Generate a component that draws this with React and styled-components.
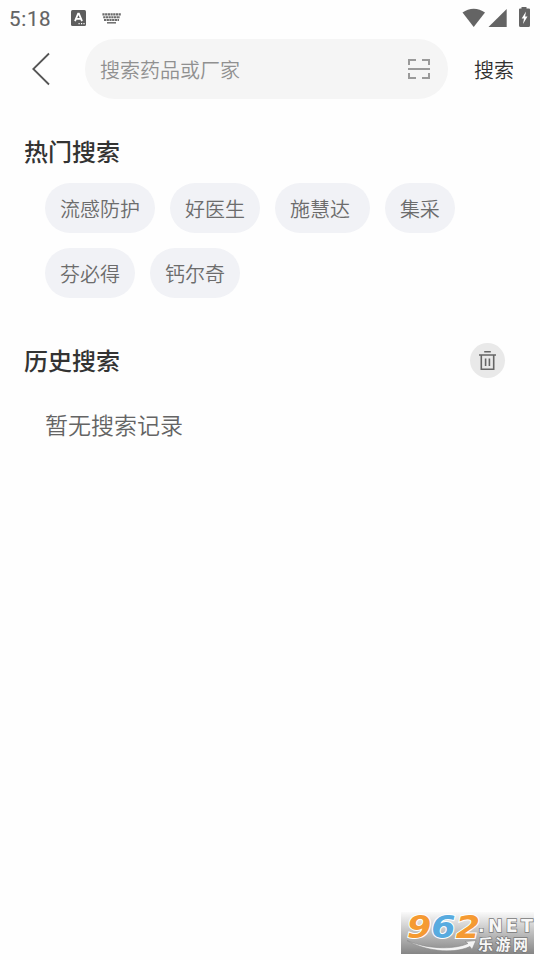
import React from 'react';
import styled, { createGlobalStyle } from 'styled-components';

const GlobalStyle = createGlobalStyle`
  * {
    box-sizing: border-box;
  }

  body {
    margin: 0;
    background: #fefefe;
    font-family: Roboto, "Noto Sans CJK SC", sans-serif;
  }
`;

const Screen = styled.div`
  position: relative;
  width: 540px;
  height: 960px;
  overflow: hidden;
  background: #fefefe;
`;

const StatusBar = styled.div`
  height: 39px;
  padding: 0 9px 3px 9px;
  display: flex;
  align-items: center;
  justify-content: space-between;
`;

const StatusGroup = styled.div`
  display: flex;
  align-items: center;
`;

const Clock = styled.span`
  width: 62px;
  padding-top: 2px;
  font-size: 20.5px;
  line-height: 36px;
  letter-spacing: 0.7px;
  color: #646464;
  -webkit-text-stroke: 0.15px #646464;
`;

const StatusIcons = styled.div`
  display: flex;
  align-items: center;
  gap: 16px;
`;

const SearchHeader = styled.header`
  height: 60px;
  display: flex;
  align-items: center;
`;

const BackButton = styled.button`
  width: 85px;
  height: 60px;
  padding: 0 0 0 31px;
  border: none;
  background: none;
  display: flex;
  align-items: center;
`;

const SearchField = styled.div`
  width: 363px;
  height: 60px;
  padding: 0 16px 0 15px;
  border-radius: 30px;
  background: #f5f5f5;
  display: flex;
  align-items: center;
  justify-content: space-between;
`;

const Placeholder = styled.span`
  padding-top: 3px;
  font-size: 20px;
  font-weight: 350;
  line-height: 30px;
  color: #909090;
`;

const SearchButton = styled.button`
  margin-left: 26px;
  padding: 3px 0 0;
  border: none;
  background: none;
  font-family: inherit;
  font-size: 20px;
  font-weight: 350;
  line-height: 30px;
  color: #303030;
`;

const Section = styled.section`
  padding: 0 35px 0 24px;
  margin-top: ${props => props.$top}px;
`;

const SectionHeader = styled.div`
  height: 36px;
  display: flex;
  align-items: center;
  justify-content: space-between;
`;

const SectionTitle = styled.h2`
  margin: 0;
  padding-top: ${props => props.$drop}px;
  font-size: 24px;
  font-weight: 500;
  line-height: 36px;
  color: #333;
`;

const ChipList = styled.div`
  margin-top: 13px;
  padding-left: 21px;
  display: flex;
  flex-wrap: wrap;
  gap: 15px;
`;

const Chip = styled.span`
  height: 50px;
  padding: 2px 15px 0;
  border-radius: 25px;
  background: #f1f2f6;
  font-size: 20px;
  font-weight: 350;
  line-height: 50px;
  white-space: pre;
  color: #6c6c6c;
`;

const ClearButton = styled.button`
  width: 35px;
  height: 35px;
  padding: 0;
  border: none;
  border-radius: 50%;
  background: #e9e9e9;
  display: flex;
  align-items: center;
  justify-content: center;
`;

const EmptyHistory = styled.p`
  margin: 31px 0 0 21px;
  font-size: 23px;
  font-weight: 350;
  line-height: 36px;
  color: #646464;
`;

const Watermark = styled.div`
  position: absolute;
  left: 401px;
  top: 912px;
  width: 133px;
  height: 42px;
  background: linear-gradient(#fafafa, #c4c4c4 45%, #858585);

  svg {
    display: block;
    overflow: visible;
  }
`;

const hotWords = ['流感防护', '好医生', '施慧达 ', '集采', '芬必得', '钙尔奇'];

const InputModeIcon = () => (
  <svg width="15" height="16" viewBox="0 0 15 16">
    <rect width="15" height="16" rx="1.5" fill="#5d5d5d" />
    <path d="M4 11.2 7.1 3.6h.8L11 11.2M5.2 8.8h4.6" fill="none" stroke="#fff" strokeWidth="1.8" />
    <path d="M7.5 13.7h1.2M10 13.7h1.2M12.4 13.7h1.2" stroke="#fff" strokeWidth="1.2" />
  </svg>
);

const KeyboardIcon = () => (
  <svg width="19" height="11" viewBox="0 0 19 11">
    <g stroke="#6c6c6c" strokeWidth="2.1" fill="none">
      <path d="M.4 1.4H19" strokeDasharray="2.2 .5" />
      <path d="M1.2 4.2H18" strokeDasharray="2.2 .5" />
      <path d="M2 7H17" strokeDasharray="2.2 .5" />
      <path d="M5 9.8h9" strokeWidth="1.5" />
    </g>
  </svg>
);

const SignalIcons = () => (
  <svg width="69" height="22" viewBox="0 0 69 22" fill="#646464">
    <path d="M.5 5.5C7.2.4 16.3.4 23 5.5L11.7 20z" />
    <path d="M44.7 2v18H26.5z" />
    <path d="M59.5 0h5v1.500H67a1 1 0 0 1 1 1V18.500a1.500 1.500 0 0 1-1.500 1.500h-8A1.500 1.500 0 0 1 57 18.500V2.500a1 1 0 0 1 1-1h1.500z" />
    <path d="m64 4.500-4.300 7h2.300l-1 5.500 4.500-7.500h-2.400z" fill="#fff" />
  </svg>
);

const BackIcon = () => (
  <svg width="20" height="34" viewBox="0 0 20 34" fill="none" stroke="#555" strokeWidth="1.8">
    <path d="M18 1.500 2.300 17 18 32.500" />
  </svg>
);

const ScanIcon = () => (
  <svg width="26" height="22" viewBox="0 0 26 22" fill="none" stroke="#9a9a9a" strokeWidth="2">
    <path d="M3 7V2h7M16 2h7v5M3 15v5h7M16 20h7v-5M2 11h22" />
  </svg>
);

const TrashIcon = () => (
  <svg width="19" height="21" viewBox="0 0 19 21" fill="none" stroke="#666" strokeWidth="1.6">
    <path d="M6.200 1.800h6.600M1 5h17M3.300 5v14.200h12.400V5M7.600 8.500v7.500M11.400 8.500v7.500" />
  </svg>
);

const WatermarkLogo = () => (
  <svg width="133" height="42" viewBox="0 0 133 42">
    <g
      fontFamily="DejaVu Sans"
      fontWeight="700"
      fontStyle="italic"
      fontSize="32"
      stroke="#fff"
      strokeWidth="2"
      paintOrder="stroke"
    >
      <text x="6" y="26" textLength="73" lengthAdjust="spacingAndGlyphs">
        <tspan fill="#f59a32">9</tspan>
        <tspan fill="#58abdf">6</tspan>
        <tspan fill="#f59a32">2</tspan>
      </text>
    </g>
    <path
      d="M6 28.500c18 8 45 10 61 3l-3-2 11-1-4 9-2-3C51 43 22 38 6 28.500z"
      fill="#f4f4f4"
      stroke="#888"
      strokeWidth=".6"
    />
    <g fill="#f7f7f7" stroke="#777" strokeWidth="1.400" paintOrder="stroke">
      <text x="77" y="19.500" textLength="55" fontFamily="DejaVu Sans" fontSize="17.500" fontWeight="700">.NET</text>
      <text x="77" y="37.500" textLength="50" fontFamily="Noto Sans CJK SC" fontSize="15" fontWeight="700">乐游网</text>
    </g>
  </svg>
);

const App = () => {
  return (
    <>
      <GlobalStyle />
      <Screen>
        <StatusBar>
          <StatusGroup>
            <Clock>5:18</Clock>
            <StatusIcons>
              <InputModeIcon />
              <KeyboardIcon />
            </StatusIcons>
          </StatusGroup>
          <SignalIcons />
        </StatusBar>

        <SearchHeader>
          <BackButton aria-label="返回">
            <BackIcon />
          </BackButton>
          <SearchField>
            <Placeholder>搜索药品或厂家</Placeholder>
            <ScanIcon />
          </SearchField>
          <SearchButton>搜索</SearchButton>
        </SearchHeader>

        <Section $top={35}>
          <SectionHeader>
            <SectionTitle $drop={2}>热门搜索</SectionTitle>
          </SectionHeader>
          <ChipList>
            {hotWords.map(word => (
              <Chip key={word}>{word}</Chip>
            ))}
          </ChipList>
        </Section>

        <Section $top={44}>
          <SectionHeader>
            <SectionTitle $drop={4}>历史搜索</SectionTitle>
            <ClearButton aria-label="清空">
              <TrashIcon />
            </ClearButton>
          </SectionHeader>
          <EmptyHistory>暂无搜索记录</EmptyHistory>
        </Section>

        <Watermark>
          <WatermarkLogo />
        </Watermark>
      </Screen>
    </>
  );
};

export default App;
